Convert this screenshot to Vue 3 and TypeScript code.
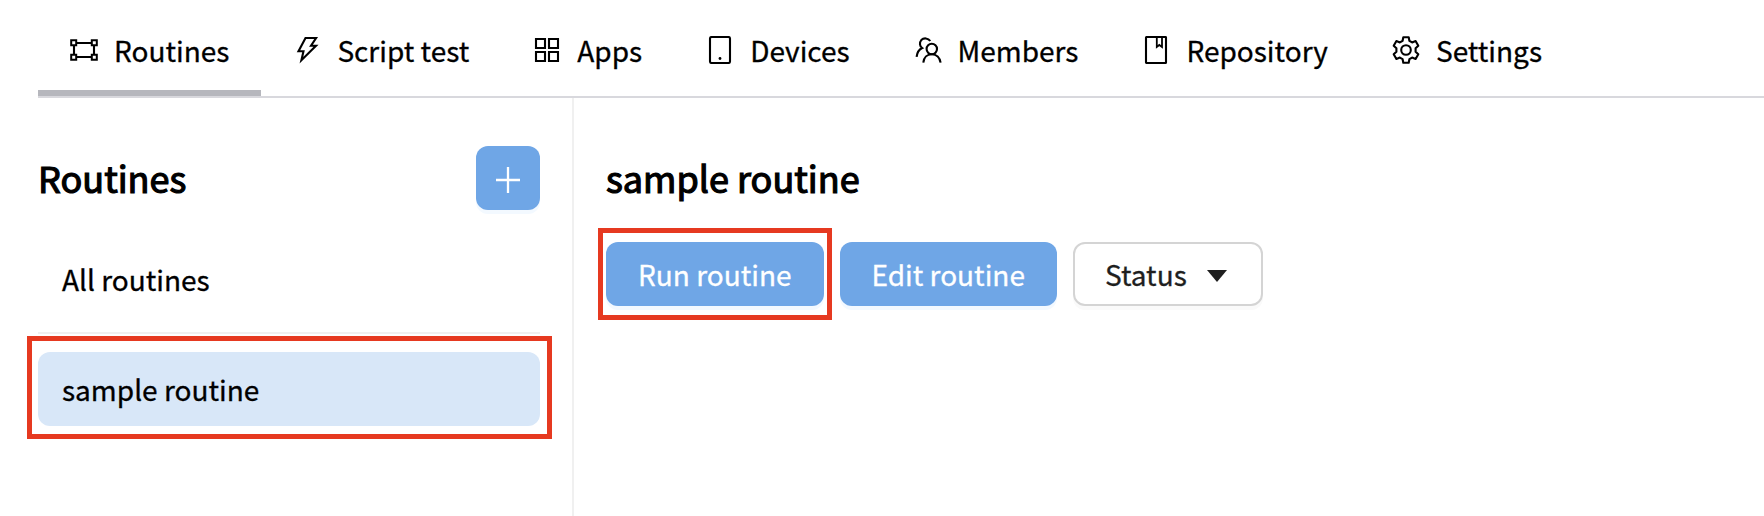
<script setup lang="ts">
import { ref } from 'vue'

interface Tab {
  id: string
  label: string
}

const tabs: Tab[] = [
  { id: 'routines', label: 'Routines' },
  { id: 'script', label: 'Script test' },
  { id: 'apps', label: 'Apps' },
  { id: 'devices', label: 'Devices' },
  { id: 'members', label: 'Members' },
  { id: 'repository', label: 'Repository' },
  { id: 'settings', label: 'Settings' },
]

const activeTab = ref('routines')
const selected = ref('sample routine')
</script>

<template>
  <div class="page">
    <nav class="tabs">
      <a
        v-for="tab in tabs"
        :key="tab.id"
        class="tab"
        :class="{ active: tab.id === activeTab }"
        @click="activeTab = tab.id"
      >
        <svg class="icon" viewBox="0 0 28 28" fill="none" stroke="#000" stroke-width="2.1">
          <g v-if="tab.id === 'routines'">
            <path d="M7 7H21M7 21H21M4 10V18M24 10V18" />
            <path d="M1.2 4.2h5v5h-5zM21.8 4.2h5v5h-5zM1.2 18.8h5v5h-5zM21.8 18.8h5v5h-5z" stroke-width="2" />
          </g>
          <path v-else-if="tab.id === 'script'" d="M12.5 2H23.1L18 9.8H23L8.4 24.3L10.5 15.2H5.5Z" />
          <path v-else-if="tab.id === 'apps'" d="M3 3h9v9h-9zM16 3h9v9h-9zM3 16h9v9h-9zM16 16h9v9h-9z" />
          <g v-else-if="tab.id === 'devices'">
            <rect x="4" y="1" width="20" height="26" rx="1.5" />
            <circle cx="14" cy="22.5" r="1.4" fill="#000" stroke="none" />
          </g>
          <g v-else-if="tab.id === 'members'">
            <circle cx="17.8" cy="13" r="5.2" />
            <path d="M9.3 26.7C9.8 21.6 13.2 18.3 17.8 18.3S25.8 21.6 26.6 26.7" />
            <path d="M16.3 5C14.2 1.9 9.7 1.6 7.3 4.1C5.2 6.5 5.6 10.2 8.2 12C5.1 13.5 3.1 16.6 2.6 20.8" />
          </g>
          <g v-else-if="tab.id === 'repository'">
            <rect x="4" y="1" width="20" height="26" rx="0.5" />
            <path d="M14.8 1V11L17.3 9L20 11V1" stroke-width="1.8" />
          </g>
          <g v-else>
            <circle cx="14" cy="14" r="4.8" />
            <path
              stroke-linejoin="round"
              d="M11.3 1.2H16.7L17.4 4.8L20.1 6.4L23.6 5.1L26.3 9.8L23.6 12.3V15.7L26.3 18.2L23.6 22.9L20.1 21.6L17.4 23.2L16.7 26.8H11.3L10.6 23.2L7.9 21.6L4.4 22.9L1.7 18.2L4.4 15.7V12.3L1.7 9.8L4.4 5.1L7.9 6.4L10.6 4.8Z"
            />
          </g>
        </svg>
        <span>{{ tab.label }}</span>
      </a>
    </nav>

    <div class="body">
      <aside class="sidebar">
        <div class="side-head">
          <h2>Routines</h2>
          <button class="btn primary add" aria-label="Add routine">
            <svg viewBox="0 0 28 28" fill="none" stroke="#fff" stroke-width="2.3">
              <path d="M14 1V27M2 14H26" />
            </svg>
          </button>
        </div>
        <div class="item">All routines</div>
        <div class="rule"></div>
        <div class="item marked" :class="{ selected: selected === 'sample routine' }">
          sample routine
          <span class="highlight side-highlight"></span>
        </div>
      </aside>

      <main class="content">
        <h2>sample routine</h2>
        <div class="actions">
          <button class="btn primary marked run">
            Run routine
            <span class="highlight run-highlight"></span>
          </button>
          <button class="btn primary edit">Edit routine</button>
          <button class="btn plain">
            Status
            <svg class="caret" viewBox="0 0 20 12"><path d="M0 0H20L10 12Z" fill="#1f1f1f" /></svg>
          </button>
        </div>
      </main>
    </div>
  </div>
</template>

<style>
body {
  margin: 0;
  background: #fff;
}
</style>

<style scoped>
.page {
  box-sizing: border-box;
  height: 516px;
  padding-left: 38px;
  display: flex;
  flex-direction: column;
  overflow: hidden;
  color: #000;
  font: 400 28px/44px 'Noto Sans CJK KR', 'Noto Sans', sans-serif;
  -webkit-text-stroke: 0.3px currentColor;
}
.tabs {
  box-sizing: border-box;
  height: 98px;
  flex: none;
  display: flex;
  border-bottom: 2px solid #d8d8dd;
}
.tab {
  box-sizing: border-box;
  height: 96px;
  padding: 4px 32px 0;
  display: flex;
  align-items: center;
  gap: 16px;
  white-space: nowrap;
  border-bottom: 6px solid transparent;
  cursor: pointer;
}
.tab.active {
  border-bottom-color: #b6b7bd;
}
.icon {
  width: 28px;
  height: 28px;
  flex: none;
  margin-top: 6px;
}
.tab span {
  margin-top: 6px;
}
.body {
  flex: 1;
  display: flex;
}
.sidebar {
  box-sizing: border-box;
  width: 536px;
  padding: 48px 32px 0 0;
  border-right: 2px solid #f0f0f0;
}
.side-head {
  display: flex;
  justify-content: space-between;
  align-items: center;
  height: 64px;
}
h2 {
  margin: 0;
  font-size: 36px;
  line-height: 62px;
  height: 64px;
  font-weight: 400;
  -webkit-text-stroke: 1.2px currentColor;
}
.btn {
  box-sizing: border-box;
  height: 64px;
  padding: 0 32px;
  border: 0;
  border-radius: 12px;
  display: flex;
  align-items: center;
  font: inherit;
  white-space: nowrap;
}
.primary {
  color: #fff;
  background: #6fa6e6;
  box-shadow: 0 4px 0 #f3f9ff;
}
.add {
  width: 64px;
  padding: 20px 18px 16px;
}
.plain {
  padding: 0 34px 0 30px;
  gap: 20px;
  color: #1f1f1f;
  background: #fff;
  border: 2px solid #d4d4d4;
  box-shadow: 0 4px 0 #fafafa;
}
.caret {
  width: 20px;
  height: 12px;
  margin-top: 4px;
}
.item {
  box-sizing: border-box;
  height: 74px;
  padding: 15px 24px;
  border-radius: 12px;
}
.side-head + .item {
  margin-top: 32px;
}
.rule {
  height: 2px;
  margin: 16px 0 18px;
  background: #f0f0f0;
}
.selected {
  background: #d8e7f8;
}
.marked {
  position: relative;
}
.highlight {
  position: absolute;
  box-sizing: border-box;
  border: 5px solid #e63920;
  pointer-events: none;
}
.side-highlight {
  inset: -16px -12px -13px -11px;
}
.run-highlight {
  inset: -14px -8px -14px -8px;
}
.content {
  flex: 1;
  padding: 48px 0 0 32px;
}
.actions {
  display: flex;
  gap: 16px;
  margin-top: 32px;
}
</style>
